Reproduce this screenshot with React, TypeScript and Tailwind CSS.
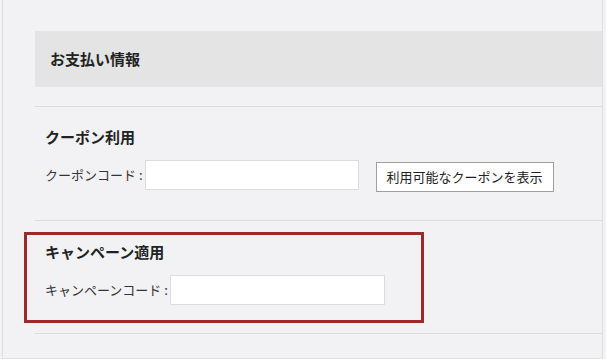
import React from 'react';

const font = { fontFamily: '"Noto Sans CJK JP", "Noto Sans", sans-serif' };

function CodeInput({ width }: { width: string }) {
  return <input type="text" className={`${width} h-[30px] border border-[#dcdcdc] bg-white outline-none`} />;
}

export default function App() {
  return (
    <div className="w-[606px] h-[359px] overflow-hidden bg-[#f2f2f4]" style={font}>
      <div className="relative ml-[2px] w-[601px] border-x border-b border-[#dedee0] pl-[32px] pt-[31px] pb-[24px]">
        <div className="flex h-[56px] items-center bg-[#e4e4e4] pl-[15px]">
          <h2 className="text-[15px] font-bold text-[#222]">お支払い情報</h2>
        </div>

        {/* クーポン */}
        <section className="mt-[19px] border-y border-[#dcdcdc] pt-[19px] pb-[28px]">
          <h3 className="pl-[10px] text-[15px] leading-[22px] font-bold text-[#222]">クーポン利用</h3>
          <div className="mt-[12px] flex items-start pl-[10px]">
            <label className="flex h-[30px] items-center text-[13px] text-[#333]">
              クーポンコード :
            </label>
            <div className="ml-[2px]">
              <CodeInput width="w-[214px]" />
            </div>
            <button className="ml-[17px] mt-[2px] h-[30px] w-[178px] border border-[#a0a0a0] bg-white text-[13px] text-[#222]">
              利用可能なクーポンを表示
            </button>
          </div>
        </section>

        {/* キャンペーン */}
        <section className="border-b border-[#dcdcdc] pt-[20px] pb-[28px]">
          <h3 className="pl-[10px] text-[15px] leading-[22px] font-bold text-[#222]">キャンペーン適用</h3>
          <div className="mt-[12px] flex items-center pl-[10px]">
            <label className="text-[13px] text-[#333]">キャンペーンコード :</label>
            <div className="ml-[2px]">
              <CodeInput width="w-[215px]" />
            </div>
          </div>
        </section>

        {/* highlight frame */}
        <div className="pointer-events-none absolute left-[21px] top-[232px] h-[91px] w-[400px] border-[3px] border-[#992b2b]" />
      </div>
    </div>
  );
}
